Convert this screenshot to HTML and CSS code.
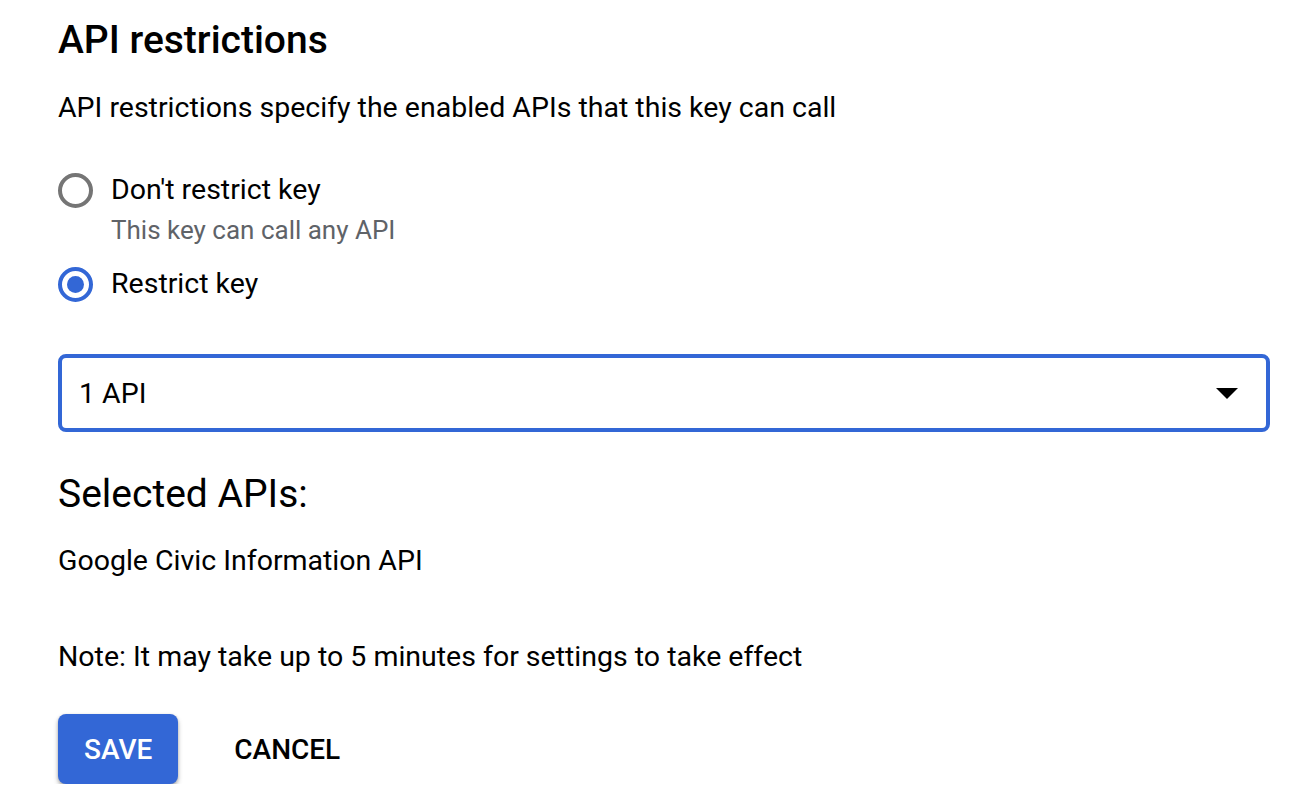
FILE: index.html
```html
<!DOCTYPE html>
<html lang="en">
<head>
  <meta charset="UTF-8" />
  <title>API restrictions</title>
  <link rel="stylesheet" href="styles.css">
</head>
<body>
  <div class="panel">
    <h2 class="title">API restrictions</h2>
    <p class="desc">API restrictions specify the enabled APIs that this key can call</p>

    <div class="radio-group">
      <label class="radio">
        <span class="circle"></span>
        <span class="radio-text">
          <span class="radio-label">Don't restrict key</span>
          <span class="radio-hint">This key can call any API</span>
        </span>
      </label>
      <label class="radio checked">
        <span class="circle"></span>
        <span class="radio-text">
          <span class="radio-label">Restrict key</span>
        </span>
      </label>
    </div>

    <div class="select">
      <span class="select-value">1 API</span>
      <span class="arrow"></span>
    </div>

    <h3 class="subtitle">Selected APIs:</h3>
    <p class="api-item">Google Civic Information API</p>

    <p class="note">Note: It may take up to 5 minutes for settings to take effect</p>

    <div class="actions">
      <button class="btn btn-save">Save</button>
      <button class="btn btn-cancel">Cancel</button>
    </div>
  </div>
</body>
</html>
```

FILE: styles.css
```css
body {
  margin: 0;
  font-family: Roboto, "Liberation Sans", sans-serif;
  color: #000;
  background: #fff;
}

.panel {
  padding: 14px 44px 0 58px;
}

.title {
  font-size: 39px;
  font-weight: 500;
  margin: 0;
  line-height: 52px;
}

.desc {
  font-size: 28.5px;
  margin: 22px 0 0;
  line-height: 40px;
}

.radio-group {
  margin-top: 42px;
}

.radio {
  display: flex;
  align-items: flex-start;
  margin-bottom: 14px;
}

.circle {
  width: 27px;
  height: 27px;
  border: 4px solid #757575;
  border-radius: 50%;
  margin-top: 3px;
  margin-right: 18px;
  position: relative;
  flex-shrink: 0;
}

.radio.checked .circle {
  border-color: #3367d6;
}

.radio.checked .circle::after {
  content: "";
  position: absolute;
  left: 5px;
  top: 5px;
  width: 17px;
  height: 17px;
  border-radius: 50%;
  background: #3367d6;
}

.radio-text {
  display: flex;
  flex-direction: column;
}

.radio-label {
  font-size: 28.5px;
  line-height: 40px;
}

.radio-hint {
  font-size: 26px;
  line-height: 40px;
  color: #5f6368;
}

.select {
  margin-top: 50px;
  height: 70px;
  border: 4px solid #3367d6;
  border-radius: 8px;
  display: flex;
  align-items: center;
  justify-content: space-between;
  padding: 0 28px 0 17px;
}

.select-value {
  font-size: 28.5px;
}

.arrow {
  width: 0;
  height: 0;
  border-left: 11px solid transparent;
  border-right: 11px solid transparent;
  border-top: 11px solid #000;
}

.subtitle {
  font-size: 39px;
  font-weight: 400;
  margin: 38px 0 0;
  line-height: 48px;
}

.api-item {
  font-size: 28.5px;
  line-height: 40px;
  margin: 23px 0 0;
}

.note {
  font-size: 28.5px;
  line-height: 40px;
  margin: 56px 0 0;
}

.actions {
  display: flex;
  gap: 30px;
  margin-top: 37px;
}

.btn {
  font-family: Roboto, "Liberation Sans", sans-serif;
  font-size: 28px;
  font-weight: 500;
  text-transform: uppercase;
  border: none;
  border-radius: 8px;
  height: 70px;
  padding: 0 26px;
  cursor: pointer;
}

.btn-save {
  background: #3367d6;
  color: #fff;
  box-shadow: 0 3px 5px rgba(0, 0, 0, 0.28), 0 1px 3px rgba(0, 0, 0, 0.15);
}

.btn-cancel {
  background: none;
  color: #000;
}
```
